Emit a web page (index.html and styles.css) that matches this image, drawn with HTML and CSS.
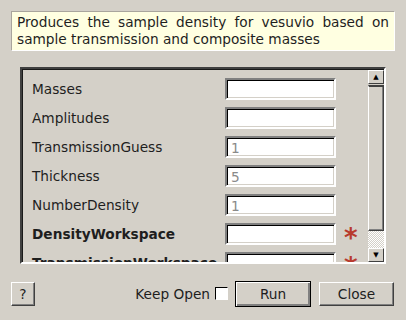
FILE: index.html
```html
<!DOCTYPE html>
<html lang="en">
<head>
  <meta charset="UTF-8">
  <title>SampleDensity</title>
  <link rel="stylesheet" href="styles.css">
</head>
<body>
  <div class="desc">Produces the sample density for vesuvio based on sample transmission and composite masses</div>

  <!-- property list with its scrollbar -->
  <div class="frame">
    <div class="rows">
      <div class="row"><span class="label">Masses</span><span class="input"></span></div>
      <div class="row"><span class="label">Amplitudes</span><span class="input"></span></div>
      <div class="row"><span class="label">TransmissionGuess</span><span class="input">1</span></div>
      <div class="row"><span class="label">Thickness</span><span class="input">5</span></div>
      <div class="row"><span class="label">NumberDensity</span><span class="input">1</span></div>
      <div class="row"><span class="label bold">DensityWorkspace</span><span class="input"></span><span class="req">*</span></div>
      <div class="row"><span class="label bold">TransmissionWorkspace</span><span class="input"></span><span class="req">*</span></div>
    </div>
    <div class="scrollbar">
      <div class="sb-btn">&#9650;</div>
      <div class="sb-thumb"></div>
      <div class="sb-track"></div>
      <div class="sb-btn">&#9660;</div>
    </div>
  </div>

  <div class="bottom">
    <button class="btn btn-help">?</button>
    <span class="spacer"></span>
    <label class="keep">Keep Open <span class="check"></span></label>
    <button class="btn btn-run">Run</button>
    <button class="btn btn-close">Close</button>
  </div>
</body>
</html>
```

FILE: styles.css
```css
body {
  margin: 0;
  background: #d4d0c8;
  font-family: "DejaVu Sans", sans-serif;
  font-size: 13.7px;
  color: #1e1e1e;
  width: 406px;
  height: 320px;
  overflow: hidden;
}
.desc {
  margin: 11px 11px 0 11px;
  height: 40px;
  box-sizing: border-box;
  padding: 2px 5px 0 5px;
  line-height: 17px;
  background: #ffffe1;
  border: 1px solid #a9a59d;
  border-right-color: #fff;
  border-bottom-color: #fff;
  text-align: justify;
  text-align-last: left;
}
/* sunken frame round the property rows */
.frame {
  margin: 16px 20px 0 20px;
  height: 197px;
  box-sizing: border-box;
  display: flex;
  border: 2px solid;
  border-color: #404040 #fff #fff #404040;
  box-shadow: inset 1px 1px 0 #1a1a1a;
}
.rows {
  flex: 1;
  overflow: hidden;
  padding: 9px 0 0 10px;
}
.row {
  display: flex;
  align-items: center;
  height: 22px;
  margin-bottom: 7px;
}
.label {
  width: 193px;
  flex: none;
  white-space: nowrap;
  overflow: visible;
}
.bold {
  font-weight: bold;
}
.input {
  width: 111px;
  height: 22px;
  box-sizing: border-box;
  flex: none;
  background: #fff;
  border: 2px solid;
  border-color: #808080 #fff #fff #808080;
  box-shadow: inset 1px 1px 0 #000, inset -1px -1px 0 #d4d0c8;
  color: #8a8a8a;
  padding: 1px 0 0 4px;
  line-height: 18px;
}
.req {
  color: #b83a2e;
  font-size: 26px;
  font-weight: bold;
  line-height: 22px;
  margin: 8px 0 0 8px;
  height: 22px;
}
.scrollbar {
  width: 16px;
  display: flex;
  flex-direction: column;
  padding-top: 1px;
}
.sb-btn {
  height: 14px;
  box-sizing: border-box;
  border: 1px solid;
  border-color: #fff #404040 #404040 #fff;
  font-size: 7px;
  line-height: 12px;
  text-align: center;
  color: #000;
}
.sb-thumb {
  height: 146px;
  box-sizing: border-box;
  margin-top: 1px;
  border: 1px solid;
  border-color: #fff #404040 #404040 #fff;
  box-shadow: inset -1px -1px 0 #808080;
  border-top: 2px solid #404040;
}
.sb-track {
  flex: 1;
  background-color: #e6e4e0;
  background-image: repeating-conic-gradient(#fff 0 25%, #d4d0c8 0 50%);
  background-size: 2px 2px;
}
.bottom {
  display: flex;
  align-items: center;
  margin: 17px 12px 0 11px;
  height: 25px;
}
.spacer {
  flex: 1;
}
.btn {
  font-family: "DejaVu Sans", sans-serif;
  font-size: 13.7px;
  color: #1e1e1e;
  background: #d4d0c8;
  height: 24px;
  box-sizing: border-box;
  border: 1px solid;
  border-color: #fff #404040 #404040 #fff;
  box-shadow: inset -1px -1px 0 #808080;
  padding: 0;
}
.btn-help {
  width: 24px;
}
.keep {
  display: flex;
  align-items: center;
  margin-right: 7px;
}
.check {
  display: inline-block;
  width: 13px;
  height: 13px;
  box-sizing: border-box;
  margin-left: 5px;
  background: #fff;
  border: 1px solid;
  border-color: #000 #fff #fff #000;
}
.btn-run {
  width: 76px;
  height: 26px;
  border: 1px solid #000;
  box-shadow: inset 1px 1px 0 #fff, inset -2px -2px 0 #808080;
}
.btn-close {
  width: 75px;
  margin-left: 8px;
}
```
